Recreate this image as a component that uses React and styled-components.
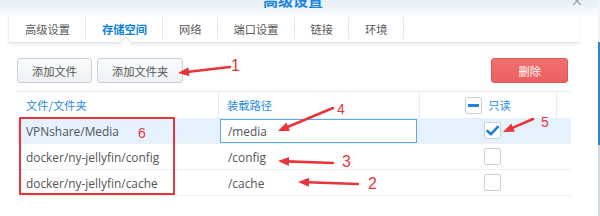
import React from "react";
import styled, { createGlobalStyle } from "styled-components";

const GlobalStyle = createGlobalStyle`
  html, body {
    margin: 0;
    padding: 0;
    background: #fff;
  }
  body {
    font-family: "Noto Sans CJK SC", "Liberation Sans", sans-serif;
  }
  * {
    box-sizing: border-box;
  }
`;

const RED = "#e8353b";

const Window = styled.div`
  position: relative;
  display: grid;
  grid-template-columns: 598px 2px;
  width: 600px;
  height: 216px;
  overflow: hidden;
  background: #fff;
`;

const Main = styled.div`
  display: flex;
  flex-direction: column;
`;

const Edge = styled.div`
  background: linear-gradient(
    to bottom,
    #f2f4f6 0,
    #f2f4f6 42px,
    #2b86d2 42px,
    #2b86d2 145px,
    #d6d9dc 145px
  );
`;

const TitleBar = styled.div`
  display: grid;
  grid-template-columns: 1fr auto 1fr;
  align-items: start;
  height: 16px;
  padding-right: 12px;
  background: linear-gradient(to bottom, #e6eef7, #fbfcfe);
`;

const Title = styled.div`
  grid-column: 2;
  margin-top: -8px;
  font-size: 15px;
  line-height: 15px;
  font-weight: 700;
  color: #1d86df;
`;

const Close = styled.div`
  justify-self: end;
  margin-top: -4px;
  margin-right: 4px;
  display: flex;
`;

const TabBar = styled.div`
  display: flex;
  height: 27px;
  margin: 0 19px 0 8px;
  background: #fff;
  border-left: 1px solid #eef0f3;
  border-bottom: 1px solid #e1e5e9;
  box-shadow: 0 2px 3px rgba(0, 0, 0, 0.07);
`;

const Tab = styled.div`
  position: relative;
  display: flex;
  align-items: center;
  padding: 0 16px;
  font-size: 11.25px;
  color: ${(p) => (p.$active ? "#0b80dc" : "#5a5a5a")};
  font-weight: ${(p) => (p.$active ? 600 : 400)};

  &::before {
    content: "";
    position: absolute;
    right: 0;
    top: 1px;
    bottom: 3px;
    width: 1px;
    background: #e4e8ec;
  }

  ${(p) =>
    p.$active &&
    `
    &::after {
      content: "";
      position: absolute;
      left: calc(50% - 4px);
      bottom: -5px;
      width: 8px;
      height: 8px;
      background: #fff;
      border-left: 1px solid #dfe3e8;
      border-top: 1px solid #dfe3e8;
      transform: rotate(45deg);
    }
  `}
`;

const Toolbar = styled.div`
  display: flex;
  gap: 5px;
  margin-top: 15px;
  padding: 0 30px 0 17px;
`;

const Button = styled.button`
  height: 25px;
  padding: 0 ${(p) => (p.$danger ? "26px" : "14px")};
  margin-left: ${(p) => (p.$danger ? "auto" : "0")};
  border: 1px solid ${(p) => (p.$danger ? "#e05757" : "#c9d0d8")};
  border-radius: 3px;
  background: ${(p) =>
    p.$danger
      ? "linear-gradient(to bottom, #f37070, #eb5f5f)"
      : "linear-gradient(to bottom, #fafbfc, #eef1f4)"};
  color: ${(p) => (p.$danger ? "#fff" : "#555")};
  font-family: inherit;
  font-size: 11.25px;
`;

const Table = styled.div`
  margin: 8px 27px 0 17px;
  border-top: 1px solid #e6e9ed;
`;

const Row = styled.div`
  display: grid;
  grid-template-columns: 201px 201px 137px 1fr;
  height: 26px;
  background: ${(p) => (p.$selected ? "#e5f1fc" : "transparent")};
  border-bottom: ${(p) => (p.$header ? "none" : "1px solid #edf0f3")};
`;

const HeadCell = styled.div`
  display: flex;
  align-items: center;
  justify-content: ${(p) => (p.$center ? "center" : "flex-start")};
  gap: 6px;
  padding-left: ${(p) => (p.$center ? "0" : p.$first ? "9px" : "8px")};
  border-left: ${(p) => (p.$first ? "none" : "1px solid #e6e9ed")};
  font-size: 11.25px;
  color: #2a8ae0;
`;

const Cell = styled.div`
  display: flex;
  align-items: center;
  justify-content: ${(p) => (p.$center ? "center" : "flex-start")};
  padding: ${(p) => (p.$input ? "0 2px" : p.$first ? "0 0 0 9px" : "0 0 0 10px")};
  font-family: "Open Sans", "Noto Sans CJK SC", sans-serif;
  font-size: 11.9px;
  color: #555;
`;

const PathInput = styled.div`
  display: flex;
  align-items: center;
  width: 100%;
  height: 24px;
  padding-left: 7px;
  background: #fff;
  border: 1px solid #5ea9e8;
`;

const Box = styled.div`
  display: flex;
  align-items: center;
  justify-content: center;
  width: 17px;
  height: 17px;
  background: #fff;
  border: 1px solid #c8cfd6;
  border-radius: 2px;
`;

const Dash = styled.div`
  width: 11px;
  height: 3px;
  background: #1c86e0;
`;

// red callouts drawn over the screenshot
const Overlay = styled.div`
  position: absolute;
  left: 0;
  top: 0;
  width: 600px;
  height: 216px;
  z-index: 2;
  pointer-events: none;
`;

const Drawing = styled.svg`
  position: absolute;
  left: 0;
  top: 0;
`;

const Label = styled.span`
  position: absolute;
  left: ${(p) => p.$x}px;
  top: ${(p) => p.$y}px;
  font-family: "Liberation Sans", sans-serif;
  font-size: ${(p) => p.$size}px;
  line-height: 1;
  color: ${RED};
`;

const Arrow = ({ x1, y1, x2, y2 }) => {
  const dx = x2 - x1;
  const dy = y2 - y1;
  const len = Math.hypot(dx, dy);
  const ux = dx / len;
  const uy = dy / len;
  const hl = 11;
  const hw = 4.5;
  const bx = x2 - ux * hl;
  const by = y2 - uy * hl;
  const pts = [
    `${x2},${y2}`,
    `${bx - uy * hw},${by + ux * hw}`,
    `${bx + uy * hw},${by - ux * hw}`,
  ].join(" ");
  return (
    <g>
      <line
        x1={x1}
        y1={y1}
        x2={bx + ux * 2}
        y2={by + uy * 2}
        stroke={RED}
        strokeWidth="2.6"
        strokeLinecap="round"
      />
      <polygon points={pts} fill={RED} />
    </g>
  );
};

const tabs = ["高级设置", "存储空间", "网络", "端口设置", "链接", "环境"];

const rows = [
  { file: "VPNshare/Media", mount: "/media", readOnly: true, selected: true },
  { file: "docker/ny-jellyfin/config", mount: "/config" },
  { file: "docker/ny-jellyfin/cache", mount: "/cache" },
];

const CheckMark = () => (
  <svg width="13" height="11" viewBox="0 0 13 11">
    <path
      d="M1.5 6 L5 9.2 L11.8 1.8"
      fill="none"
      stroke="#1a7fd9"
      strokeWidth="2.6"
      strokeLinecap="round"
      strokeLinejoin="round"
    />
  </svg>
);

const App = () => {
  return (
    <>
      <GlobalStyle />
      <Window>
        <Main>
          <TitleBar>
            <Title>高级设置</Title>
            <Close>
              <svg width="10" height="10" viewBox="0 0 10 10">
                <path d="M1 1 L9 9 M9 1 L1 9" stroke="#9aa3ad" strokeWidth="1.3" />
              </svg>
            </Close>
          </TitleBar>

          <TabBar>
            {tabs.map((t, i) => (
              <Tab key={t} $active={i === 1}>
                {t}
              </Tab>
            ))}
          </TabBar>

          <Toolbar>
            <Button>添加文件</Button>
            <Button>添加文件夹</Button>
            <Button $danger>删除</Button>
          </Toolbar>

          <Table>
            <Row $header>
              <HeadCell $first>文件/文件夹</HeadCell>
              <HeadCell>装载路径</HeadCell>
              <HeadCell $center>
                <Box>
                  <Dash />
                </Box>
                只读
              </HeadCell>
              <HeadCell />
            </Row>
            {rows.map((r) => (
              <Row key={r.file} $selected={r.selected}>
                <Cell $first>{r.file}</Cell>
                {r.selected ? (
                  <Cell $input>
                    <PathInput>{r.mount}</PathInput>
                  </Cell>
                ) : (
                  <Cell>{r.mount}</Cell>
                )}
                <Cell $center>
                  <Box>{r.readOnly && <CheckMark />}</Box>
                </Cell>
                <Cell />
              </Row>
            ))}
          </Table>
        </Main>
        <Edge />

        <Overlay>
          <Drawing width="600" height="216" viewBox="0 0 600 216">
            <rect x="20" y="118" width="154" height="76" fill="none" stroke={RED} strokeWidth="2" />
            <Arrow x1={230} y1={67} x2={178} y2={73} />
            <Arrow x1={333} y1={108} x2={278} y2={131} />
            <Arrow x1={333} y1={163} x2={278} y2={161} />
            <Arrow x1={358} y1={184} x2={298} y2={182} />
            <Arrow x1={533} y1={119} x2={503} y2={132} />
          </Drawing>
          <Label $x={231} $y={58} $size={16}>1</Label>
          <Label $x={368} $y={176} $size={16}>2</Label>
          <Label $x={342} $y={154} $size={16}>3</Label>
          <Label $x={337} $y={102} $size={14}>4</Label>
          <Label $x={541} $y={115} $size={14}>5</Label>
          <Label $x={138} $y={126} $size={14}>6</Label>
        </Overlay>
      </Window>
    </>
  );
};

export default App;
